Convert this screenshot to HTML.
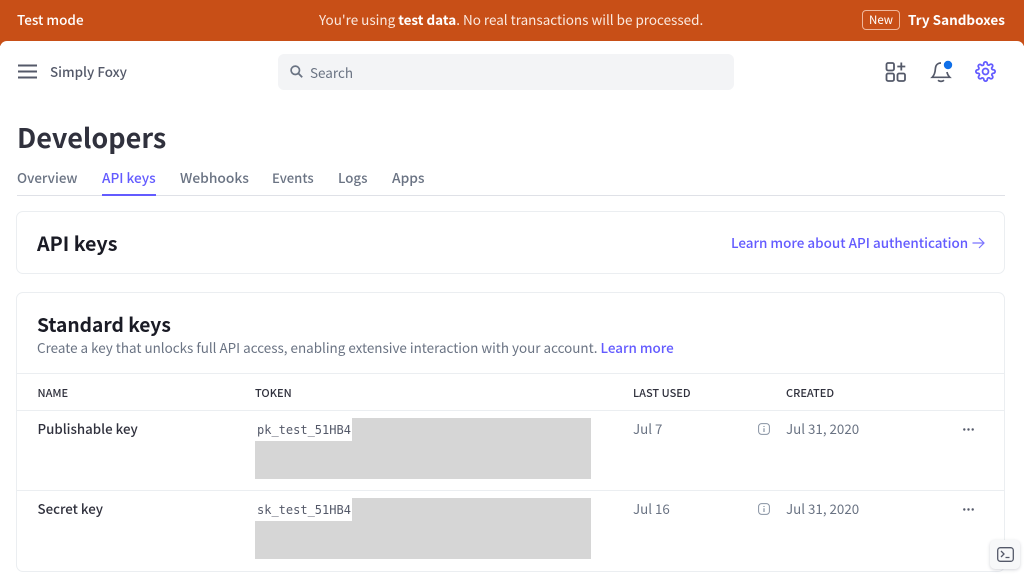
<!DOCTYPE html>
<html lang="en">
<head>
<meta charset="utf-8">
<title>Developers - API keys</title>
<style>
html,body{margin:0;padding:0;width:1024px;height:575px;overflow:hidden;background:#fff}
body{position:relative;font-family:"Noto Sans CJK JP","Liberation Sans",sans-serif;font-size:14px;color:#30313d}
.t{position:absolute;white-space:nowrap;line-height:20px}
.abs{position:absolute}
.b{font-weight:500}
svg{position:absolute;overflow:visible}
.card{position:absolute;left:16px;width:989px;border:1px solid #ebeef1;border-radius:7px;box-sizing:border-box}
.hr{position:absolute;left:17px;width:987px;height:1px;background:#ebeef1}
.th{font-size:11px;font-weight:500;color:#30313d}
.grey{color:#6a7383}
.mono{font-family:"DejaVu Sans Mono","Liberation Mono",monospace;font-size:12px;color:#545969}
.block{position:absolute;background:#d6d6d6}
</style>
</head>
<body>
<div class="abs" style="left:0;top:0;width:1024px;height:46px;background:#c84f17"></div>
<div class="abs" style="left:0;top:41px;width:1024px;height:534px;background:#fff;border-radius:7px 7px 0 0"></div>

<div class="t b" style="left:17px;top:9px;color:#fff;font-size:13.5px">Test mode</div>
<div class="t" style="left:319px;top:9px;color:#fbe9df;font-size:13.47px">You're using <span style="font-weight:700;color:#fff">test data</span>. No real transactions will be processed.</div>
<div class="abs" style="left:862px;top:10px;width:36px;height:18px;border:1px solid #f0b79b;border-radius:4px;color:#fff;font-size:11.5px;text-align:center;line-height:19px">New</div>
<div class="t" style="left:908px;top:9px;color:#fff;font-size:13.5px;font-weight:700">Try Sandboxes</div>

<svg style="left:18px;top:64px" width="19" height="16" viewBox="0 0 19 16"><path d="M0 1.5H19M0 7.5H19M0 13.5H19" stroke="#545969" stroke-width="2"/></svg>
<div class="t b" style="left:50px;top:61px;color:#545969;font-size:13.4px">Simply Foxy</div>

<div class="abs" style="left:278px;top:54px;width:456px;height:36px;background:#f3f4f6;border-radius:6px"></div>
<svg style="left:290px;top:65px" width="13" height="13" viewBox="0 0 13 13"><circle cx="5.3" cy="5.3" r="4.2" fill="none" stroke="#6a7383" stroke-width="1.7"/><path d="M8.5 8.5L12.2 12.2" stroke="#6a7383" stroke-width="1.8"/></svg>
<div class="t" style="left:310px;top:62px;color:#6a7383;font-size:13.5px">Search</div>

<svg style="left:885px;top:61px" width="22" height="22" viewBox="0 0 22 22" fill="none" stroke="#545969" stroke-width="1.8"><rect x="1.5" y="2" width="7.5" height="7.5" rx="1.6"/><rect x="1.5" y="12.5" width="7.5" height="7.5" rx="1.6"/><rect x="12.5" y="12.5" width="7.5" height="7.5" rx="1.6"/><path d="M16.3 1.5V9.5M12.3 5.5H20.3"/></svg>
<svg style="left:931px;top:60px" width="22" height="23" viewBox="0 0 22 23" fill="none" stroke="#545969" stroke-width="1.7"><path d="M10 3C6.5 3 4.6 5.5 4.4 8.5C4.2 12.5 3.5 15 1.2 17.3H18.8C17.3 15.8 16.3 14 16 12"/><path d="M7 20.3C8.5 21.7 11.5 21.7 13 20.3"/><circle cx="17" cy="5" r="4.2" fill="#0f6fe8" stroke="none"/></svg>
<svg style="left:975px;top:61px" width="21" height="21" viewBox="0 0 24 24" fill="none" stroke="#635bff" stroke-width="2" stroke-linejoin="round"><circle cx="12" cy="12" r="3.4"/><path d="M19.4 15a1.65 1.65 0 0 0 .33 1.82l.06.06a2 2 0 1 1-2.83 2.83l-.06-.06a1.65 1.65 0 0 0-2.82 1.17V21a2 2 0 1 1-4 0v-.09A1.65 1.65 0 0 0 7.4 19.7l-.06.06a2 2 0 1 1-2.83-2.83l.06-.06A1.65 1.65 0 0 0 3.4 14H3a2 2 0 1 1 0-4h.09A1.65 1.65 0 0 0 4.3 7.4l-.06-.06a2 2 0 1 1 2.83-2.83l.06.06A1.65 1.65 0 0 0 10 3.4V3a2 2 0 1 1 4 0v.09a1.65 1.65 0 0 0 2.8 1.17l.06-.06a2 2 0 1 1 2.83 2.83l-.06.06A1.65 1.65 0 0 0 20.6 10H21a2 2 0 1 1 0 4h-.09a1.65 1.65 0 0 0-1.51 1z"/></svg>

<div class="t" style="left:17px;top:120px;font-size:27px;line-height:34px;font-weight:700;color:#30313d">Developers</div>

<div class="t b grey" style="left:17px;top:167px;font-size:13.4px">Overview</div>
<div class="t b" style="left:102px;top:167px;font-size:13.6px;color:#635bff">API keys</div>
<div class="t b grey" style="left:180px;top:167px;font-size:13.8px">Webhooks</div>
<div class="t b grey" style="left:272px;top:168px;font-size:13.1px">Events</div>
<div class="t b grey" style="left:338px;top:168px;font-size:13.3px">Logs</div>
<div class="t b grey" style="left:392px;top:167px;font-size:13.8px">Apps</div>
<div class="abs" style="left:17px;top:195px;width:988px;height:1px;background:#dfe1e7"></div>
<div class="abs" style="left:102px;top:194px;width:54px;height:2px;background:#635bff"></div>

<div class="card" style="top:211px;height:63px"></div>
<div class="t" style="left:37px;top:232px;font-size:19.7px;line-height:22px;font-weight:700;color:#1a1b25">API keys</div>
<div class="t b" style="left:731px;top:232px;font-size:13.47px;color:#635bff">Learn more about API authentication</div>
<svg style="left:972px;top:237px" width="13" height="12" viewBox="0 0 13 12" fill="none" stroke="#7a73ff" stroke-width="1.2"><path d="M0.5 6H12M7 1L12 6L7 11"/></svg>

<div class="card" style="top:292px;height:280px"></div>
<div class="t" style="left:37px;top:312px;font-size:19.2px;line-height:24px;font-weight:700;color:#1a1b25">Standard keys</div>
<div class="t grey" style="left:37px;top:337px;font-size:13.45px">Create a key that unlocks full API access, enabling extensive interaction with your account. <span class="b" style="color:#635bff">Learn more</span></div>

<div class="hr" style="top:373px"></div>
<div class="t th" style="left:37.5px;top:383px">NAME</div>
<div class="t th" style="left:255px;top:383px">TOKEN</div>
<div class="t th" style="left:633px;top:383px">LAST USED</div>
<div class="t th" style="left:786px;top:383px">CREATED</div>
<div class="hr" style="top:410px"></div>

<div class="t b" style="left:37.5px;top:419px;font-size:13.3px;color:#30313d">Publishable key</div>
<div class="block" style="left:352px;top:418px;width:239px;height:23px"></div>
<div class="block" style="left:255px;top:441px;width:336px;height:38px"></div>
<div class="t mono" style="left:257px;top:420px">pk_test_51HB4</div>
<div class="t grey" style="left:633px;top:419px;font-size:13.35px">Jul 7</div>
<svg style="left:758px;top:423px" width="12" height="12" viewBox="0 0 12 12" fill="none" stroke="#8792a2"><rect x="0.6" y="0.6" width="10.8" height="10.8" rx="3"/><path d="M6 5.2V9M6 3V4" stroke-width="1.2"/></svg>
<div class="t grey" style="left:786px;top:419px;font-size:13.35px">Jul 31, 2020</div>
<svg style="left:963px;top:428px" width="11" height="3" viewBox="0 0 11 3" fill="#545969"><circle cx="1.3" cy="1.5" r="1.2"/><circle cx="5.5" cy="1.5" r="1.2"/><circle cx="9.7" cy="1.5" r="1.2"/></svg>
<div class="hr" style="top:490px"></div>

<div class="t b" style="left:37.5px;top:499px;font-size:13.3px;color:#30313d">Secret key</div>
<div class="block" style="left:352px;top:498px;width:239px;height:23px"></div>
<div class="block" style="left:255px;top:521px;width:336px;height:38px"></div>
<div class="t mono" style="left:257px;top:500px">sk_test_51HB4</div>
<div class="t grey" style="left:633px;top:499px;font-size:13.35px">Jul 16</div>
<svg style="left:758px;top:503px" width="12" height="12" viewBox="0 0 12 12" fill="none" stroke="#8792a2"><rect x="0.6" y="0.6" width="10.8" height="10.8" rx="3"/><path d="M6 5.2V9M6 3V4" stroke-width="1.2"/></svg>
<div class="t grey" style="left:786px;top:499px;font-size:13.35px">Jul 31, 2020</div>
<svg style="left:963px;top:508px" width="11" height="3" viewBox="0 0 11 3" fill="#545969"><circle cx="1.3" cy="1.5" r="1.2"/><circle cx="5.5" cy="1.5" r="1.2"/><circle cx="9.7" cy="1.5" r="1.2"/></svg>

<div class="abs" style="left:990px;top:540px;width:30px;height:29px;background:#f7f8f9;border-radius:5px;box-shadow:0 1px 3px rgba(60,66,87,.22)"></div>
<svg style="left:997px;top:547px" width="17" height="15" viewBox="0 0 17 15" fill="none" stroke="#545969" stroke-width="1.3"><rect x="0.7" y="0.7" width="15.6" height="13.6" rx="2.6"/><path d="M4 4L7 7L4 10M8.5 10.5H12.5"/></svg>
</body>
</html>
